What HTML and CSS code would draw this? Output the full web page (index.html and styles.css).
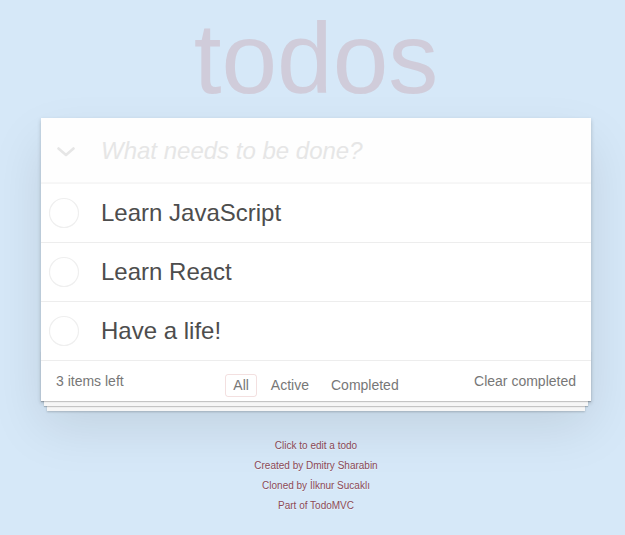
FILE: index.html
```html
<!DOCTYPE html>
<html lang="en">
<head>
<meta charset="utf-8">
<title>todos</title>
<link rel="stylesheet" href="styles.css">
</head>
<body>
<div class="page">
  <header class="brand">
    <h1 class="title">todos</h1>
  </header>
  <section class="todoapp">
    <div class="new-row">
      <span class="toggle-all">
        <svg width="18" height="10" viewBox="0 0 18 10"><polyline points="1.5,1.5 9,8 16.5,1.5" fill="none" stroke="#e6e6e6" stroke-width="2.6" stroke-linecap="round" stroke-linejoin="round"/></svg>
      </span>
      <input class="new-todo" type="text" placeholder="What needs to be done?">
    </div>
    <ul class="todo-list">
      <li class="todo">
        <span class="toggle"><svg width="32" height="32" viewBox="0 0 32 32"><circle cx="16" cy="16" r="14.5" fill="none" stroke="#efefef" stroke-width="1.2"/></svg></span>
        <label class="todo-label">Learn JavaScript</label>
      </li>
      <li class="todo">
        <span class="toggle"><svg width="32" height="32" viewBox="0 0 32 32"><circle cx="16" cy="16" r="14.5" fill="none" stroke="#efefef" stroke-width="1.2"/></svg></span>
        <label class="todo-label">Learn React</label>
      </li>
      <li class="todo">
        <span class="toggle"><svg width="32" height="32" viewBox="0 0 32 32"><circle cx="16" cy="16" r="14.5" fill="none" stroke="#efefef" stroke-width="1.2"/></svg></span>
        <label class="todo-label">Have a life!</label>
      </li>
    </ul>
    <footer class="footer">
      <span class="todo-count">3 items left</span>
      <ul class="filters">
        <li><a class="filter selected">All</a></li>
        <li><a class="filter">Active</a></li>
        <li><a class="filter">Completed</a></li>
      </ul>
      <span class="clear-completed">Clear completed</span>
    </footer>
  </section>
  <footer class="info">
    <p>Click to edit a todo</p>
    <p>Created by Dmitry Sharabin</p>
    <p>Cloned by İlknur Sucaklı</p>
    <p>Part of TodoMVC</p>
  </footer>
</div>
</body>
</html>
```

FILE: styles.css
```css
html, body {
  margin: 0;
  padding: 0;
}
body {
  background: #d6e8f8;
  font-family: "Liberation Sans", Arial, Helvetica, sans-serif;
  font-size: 14px;
  color: #4d4d4d;
  min-height: 535px;
}
.page {
  width: 550px;
  margin-left: 41px;
}
.brand {
  padding-top: 8px;
  margin-bottom: 10px;
}
.title {
  margin: 0;
  height: 100px;
  font-size: 100px;
  line-height: 100px;
  font-weight: 400;
  text-align: center;
  color: rgba(175, 47, 47, 0.15);
}
.todoapp {
  position: relative;
  background: #fff;
  box-shadow: 0 2px 4px 0 rgba(0, 0, 0, 0.2), 0 25px 50px 0 rgba(0, 0, 0, 0.1);
}
.new-row {
  display: flex;
  align-items: center;
  height: 66px;
  background: rgba(0, 0, 0, 0.003);
  box-shadow: inset 0 -2px 1px rgba(0, 0, 0, 0.03);
}
.toggle-all {
  width: 44px;
  padding-left: 16px;
  display: flex;
  align-items: center;
  height: 10px;
  margin-top: 2px;
}
.toggle-all svg {
  display: block;
}
.new-todo {
  flex: 1;
  min-width: 0;
  height: 66px;
  box-sizing: border-box;
  padding: 16px 16px 16px 0;
  border: none;
  outline: none;
  background: transparent;
  font-family: inherit;
  font-size: 24px;
  line-height: 34px;
  color: #4d4d4d;
}
.new-todo::placeholder {
  font-style: italic;
  color: #e6e6e6;
}
.todo-list {
  margin: 0;
  padding: 0;
  list-style: none;
}
.todo {
  display: flex;
  align-items: center;
  border-bottom: 1px solid #ededed;
}
.toggle {
  width: 32px;
  height: 32px;
  margin-left: 7px;
  margin-right: 21px;
}
.toggle svg {
  display: block;
}
.todo-label {
  padding: 15px 15px 15px 0;
  font-size: 24px;
  line-height: 28px;
  color: #4d4d4d;
}
.footer {
  position: relative;
  display: grid;
  grid-template-columns: 1fr auto 1fr;
  align-items: start;
  height: 20px;
  padding: 10px 15px;
  color: #777;
}
.footer::before {
  content: "";
  position: absolute;
  right: 0;
  bottom: 0;
  left: 0;
  height: 50px;
  overflow: hidden;
  pointer-events: none;
  box-shadow: 0 1px 1px rgba(0, 0, 0, 0.2),
              0 8px 0 -3px #f6f6f6,
              0 9px 1px -3px rgba(0, 0, 0, 0.2),
              0 16px 0 -6px #f6f6f6,
              0 17px 2px -6px rgba(0, 0, 0, 0.2);
}
.todo-count {
  justify-self: start;
  line-height: 20px;
}
.filters {
  display: flex;
  margin: 0;
  padding: 0;
  list-style: none;
}
.filter {
  display: block;
  margin: 3px;
  padding: 3px 7px;
  line-height: 15px;
  border: 1px solid transparent;
  border-radius: 3px;
  color: inherit;
}
.filter.selected {
  border-color: rgba(175, 47, 47, 0.15);
}
.clear-completed {
  justify-self: end;
  line-height: 20px;
}
.info {
  margin-top: 40px;
  text-align: center;
  font-size: 10px;
  color: #8c4a57;
  text-shadow: 0 1px 0 rgba(255, 255, 255, 0.5);
}
.info p {
  margin: 10px 0;
  line-height: 1;
}
```
